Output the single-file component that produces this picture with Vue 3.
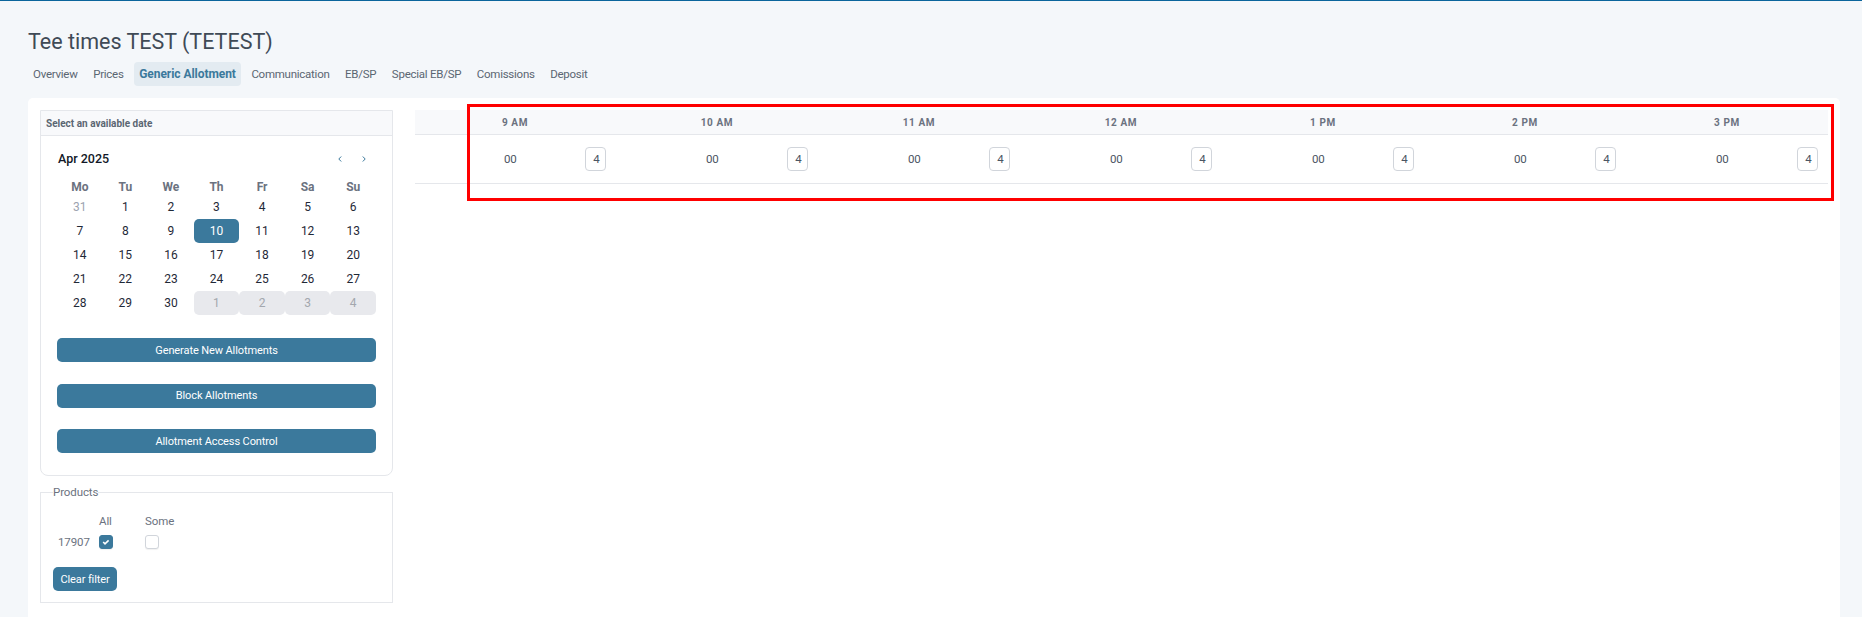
<template>
  <div class="page">
    <h1 class="title">Tee times TEST (TETEST)</h1>
    <nav class="tabs">
      <a v-for="tab in tabs" :key="tab" class="tab" :class="{ active: tab === 'Generic Allotment' }">{{ tab }}</a>
    </nav>

    <div class="card">
      <aside class="side">
        <section class="calendar-box">
          <header class="box-head">Select an available date</header>
          <div class="calendar">
            <div class="month">
              <span>Apr 2025</span>
              <span class="nav">
                <svg width="6" height="8" viewBox="0 0 6 8"><path d="M4.2 1.5 1.8 4l2.4 2.5" /></svg>
                <svg width="6" height="8" viewBox="0 0 6 8"><path d="M1.8 1.5 4.2 4 1.8 6.5" /></svg>
              </span>
            </div>
            <div class="week">
              <span v-for="d in weekdays" :key="d">{{ d }}</span>
            </div>
            <div class="days">
              <span v-for="d in days" :key="d.key" class="day" :class="d.kind">{{ d.label }}</span>
            </div>
            <div class="actions">
              <button v-for="a in actions" :key="a" class="btn wide">{{ a }}</button>
            </div>
          </div>
        </section>

        <fieldset class="products">
          <legend>Products</legend>
          <div class="filter">
            <span></span>
            <span>All</span>
            <span>Some</span>
            <span class="code">17907</span>
            <span class="check on">
              <svg width="8" height="6" viewBox="0 0 8 6"><path d="M1.2 3l1.8 1.8 3.6-3.4" /></svg>
            </span>
            <span class="check"></span>
          </div>
          <button class="btn clear">Clear filter</button>
        </fieldset>
      </aside>

      <main class="schedule">
        <div class="hours">
          <span v-for="h in hours" :key="h" class="hour"><span class="hour-label">{{ h }}</span></span>
        </div>
        <div class="slots">
          <div v-for="h in hours" :key="h" class="slot">
            <span>00</span>
            <span class="count">4</span>
          </div>
        </div>
      </main>
    </div>

    <div class="highlight"></div>
  </div>
</template>

<script setup>
const tabs = ['Overview', 'Prices', 'Generic Allotment', 'Communication', 'EB/SP', 'Special EB/SP', 'Comissions', 'Deposit']
const weekdays = ['Mo', 'Tu', 'We', 'Th', 'Fr', 'Sa', 'Su']
const hours = ['9 AM', '10 AM', '11 AM', '12 AM', '1 PM', '2 PM', '3 PM']
const actions = ['Generate New Allotments', 'Block Allotments', 'Allotment Access Control']

const days = [{ key: 'p31', label: 31, kind: 'prev' }]
for (let i = 1; i <= 30; i++) {
  days.push({ key: 'd' + i, label: i, kind: i === 10 ? 'selected' : '' })
}
for (let i = 1; i <= 4; i++) {
  days.push({ key: 'n' + i, label: i, kind: 'next' })
}
</script>

<style>
body {
  background: #f4f7fa;
}
</style>

<style scoped>
.page {
  position: relative;
  box-sizing: border-box;
  height: 617px;
  overflow: hidden;
  padding: 28px 22px 0 28px;
  border-top: 1px solid #0b659c;
  background: #f4f7fa;
  font-family: Roboto, "Noto Sans", sans-serif;
  font-size: 11.5px;
  letter-spacing: -0.1px;
  color: #374151;
}

.title {
  margin: 0;
  height: 25px;
  font-size: 21.5px;
  line-height: 25px;
  font-weight: 400;
  letter-spacing: 0;
  color: #3f4a56;
}

.tabs {
  display: flex;
  gap: 5.5px;
  margin: 8px 0 12px 0;
}

.tab {
  padding: 0 5px;
  height: 24px;
  line-height: 24px;
  border-radius: 4px;
  letter-spacing: -0.25px;
  color: #5b6672;
}

.tab.active {
  background: #e3ebf1;
  color: #3b799c;
  font-size: 12px;
  font-weight: 700;
  letter-spacing: -0.05px;
}

.card {
  display: flex;
  height: 540px;
  padding: 12px;
  box-sizing: border-box;
  background: #fff;
  border-radius: 5px 5px 0 0;
}

.side {
  flex: none;
  width: 353px;
  margin-right: 22px;
}

.calendar-box {
  box-sizing: border-box;
  height: 366px;
  border: 1px solid #e5e7eb;
  border-radius: 0 0 8px 8px;
}

.box-head {
  height: 24px;
  padding-left: 5px;
  line-height: 25px;
  font-size: 10px;
  font-weight: 700;
  letter-spacing: 0;
  color: #5b6672;
  background: #f8f9fb;
  border-bottom: 1px solid #e5e7eb;
}

.calendar {
  padding: 0 16px;
}

.month {
  display: flex;
  align-items: center;
  justify-content: space-between;
  box-sizing: border-box;
  height: 43px;
  padding-top: 2px;
  margin-left: 1px;
  font-size: 12.5px;
  font-weight: 500;
  letter-spacing: 0;
  color: #111827;
}

.nav {
  display: flex;
  gap: 18px;
  margin-right: 9px;
}

.nav svg {
  fill: none;
  stroke: #3b799c;
  stroke-width: 1;
}

.week,
.days {
  display: grid;
  grid-template-columns: repeat(7, 1fr);
  text-align: center;
  font-size: 12px;
  letter-spacing: 0;
}

.week {
  height: 16px;
  line-height: 16px;
  font-weight: 700;
  color: #6b7280;
}

.day {
  height: 24px;
  line-height: 24px;
  border-radius: 5px;
  color: #1f2937;
}

.day.prev {
  color: #9ca3af;
}

.day.selected {
  background: #3b799c;
  color: #fff;
}

.day.next {
  background: #e8e9ed;
  color: #a3a7ae;
}

.actions {
  display: flex;
  flex-direction: column;
  gap: 21.5px;
  margin-top: 23px;
}

.btn {
  display: block;
  height: 24px;
  padding: 0;
  border: 0;
  border-radius: 5px;
  background: #3b799c;
  color: #fff;
  font: inherit;
  font-size: 11px;
  letter-spacing: inherit;
}

.wide {
  width: 100%;
}

.products {
  box-sizing: border-box;
  height: 119px;
  margin: 8px 0 0;
  padding: 0 12px;
  border: 1px solid #e5e7eb;
  min-width: 0;
}

.products legend {
  padding: 0;
  color: #6b7280;
  line-height: 16px;
}

.filter {
  display: grid;
  grid-template-columns: 46px 46px auto;
  grid-auto-rows: 16px;
  justify-content: start;
  align-items: center;
  row-gap: 5px;
  margin-top: 13px;
  color: #6b7280;
}

.code {
  padding-left: 5px;
}

.check {
  box-sizing: border-box;
  display: flex;
  align-items: center;
  justify-content: center;
  width: 14px;
  height: 14px;
  border: 1px solid #d1d5db;
  border-radius: 3px;
  background: #fff;
  box-shadow: 0 1px 1px rgba(0, 0, 0, 0.06);
}

.check.on {
  border-color: #3b799c;
  background: #3b799c;
}

.check svg {
  fill: none;
  stroke: #fff;
  stroke-width: 1.6;
}

.clear {
  width: 64px;
  margin-top: 17px;
}

.schedule {
  flex: 1;
  min-width: 0;
}

.hours,
.slots {
  display: flex;
  gap: 79px;
  padding-left: 78px;
}

.hours {
  height: 24px;
  align-items: center;
  background: #f8f9fb;
  border-bottom: 1px solid #e5e7eb;
}

.hour {
  width: 123px;
  flex: none;
}

.hour-label {
  display: block;
  width: 44px;
  text-align: center;
  font-size: 10px;
  font-weight: 700;
  letter-spacing: 0.6px;
  color: #6b7280;
}

.slots {
  height: 48px;
  align-items: center;
  border-bottom: 1px solid #e5e7eb;
}

.slot {
  display: flex;
  align-items: center;
  justify-content: space-between;
  box-sizing: border-box;
  width: 123px;
  padding: 0 10px 0 11px;
  color: #4b5563;
}

.count {
  box-sizing: border-box;
  width: 21px;
  height: 24px;
  padding-left: 2px;
  line-height: 22px;
  text-align: center;
  border: 1px solid #d1d5db;
  border-radius: 4px;
}

.highlight {
  position: absolute;
  left: 467px;
  top: 103px;
  width: 1367px;
  height: 97px;
  box-sizing: border-box;
  border: 3px solid #f00;
  pointer-events: none;
}
</style>
